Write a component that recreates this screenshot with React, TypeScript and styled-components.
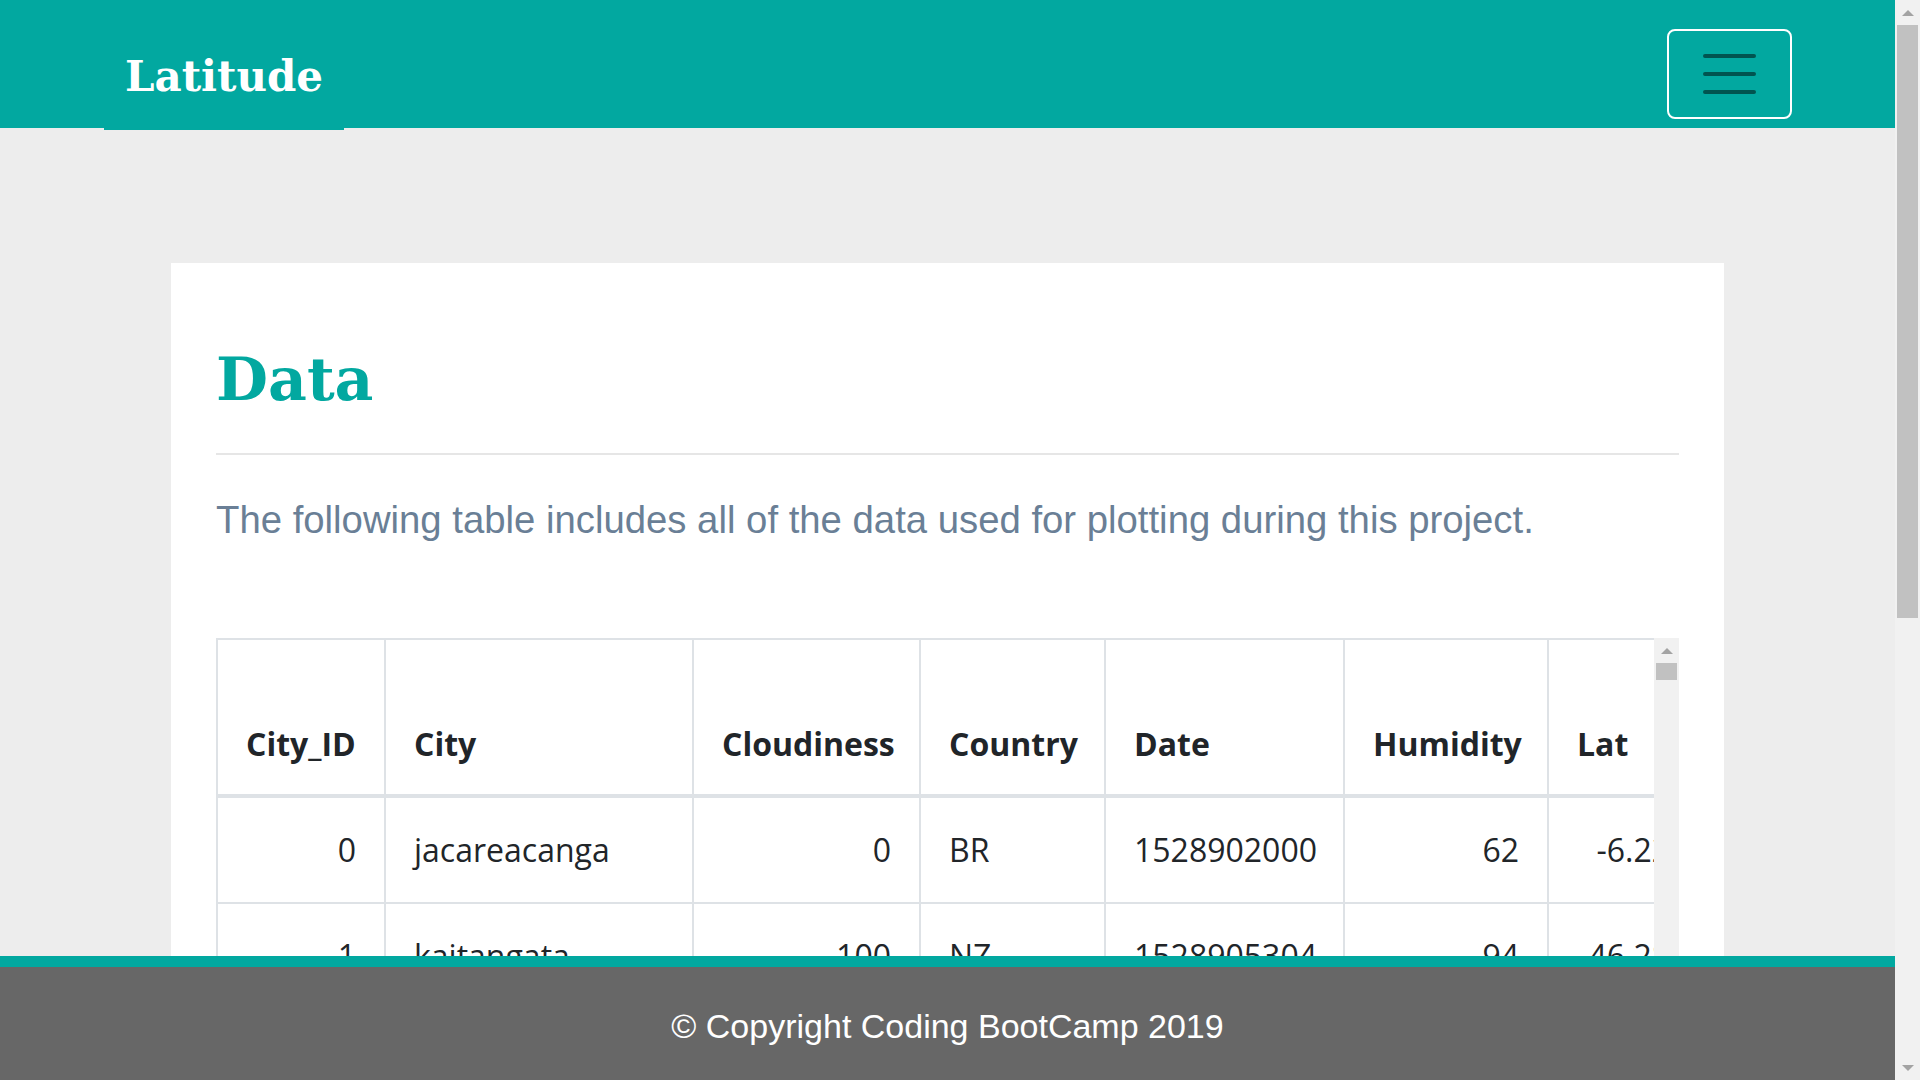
import styled, { createGlobalStyle } from "styled-components";

const GlobalStyle = createGlobalStyle`
  html, body {
    margin: 0;
    padding: 0;
    background: #ededed;
  }
  * {
    box-sizing: border-box;
  }
`;

const TEAL = "#02a8a0";

type Row = (string | number)[];

const columns = [
  { name: "City_ID", width: 168, numeric: true },
  { name: "City", width: 308, numeric: false },
  { name: "Cloudiness", width: 227, numeric: true },
  { name: "Country", width: 185, numeric: false },
  { name: "Date", width: 239, numeric: false },
  { name: "Humidity", width: 204, numeric: true },
  { name: "Lat", width: 151, numeric: true },
  { name: "Lng", width: 170, numeric: true },
  { name: "Max Temp", width: 210, numeric: true },
  { name: "Wind Speed", width: 230, numeric: true },
];

const places: [string, string][] = [
  ["jacareacanga", "BR"],
  ["kaitangata", "NZ"],
  ["ushuaia", "AR"],
  ["hermanus", "ZA"],
  ["punta arenas", "CL"],
  ["rikitea", "PF"],
  ["busselton", "AU"],
  ["albany", "AU"],
  ["mataura", "NZ"],
  ["hobart", "AU"],
  ["castro", "CL"],
  ["vaini", "IN"],
  ["new norfolk", "AU"],
  ["atuona", "PF"],
  ["bluff", "NZ"],
  ["cape town", "ZA"],
  ["bredasdorp", "ZA"],
  ["port alfred", "ZA"],
  ["tasiilaq", "GL"],
  ["saint-philippe", "CA"],
  ["lebu", "ET"],
  ["hilo", "US"],
  ["avarua", "CK"],
  ["hithadhoo", "MV"],
  ["butaritari", "KI"],
  ["kapaa", "US"],
  ["qaanaq", "GL"],
  ["jamestown", "AU"],
  ["upernavik", "GL"],
  ["east london", "ZA"],
];

// deterministic filler for the rest of the table
let seed = 11;
const rnd = () => {
  seed = (seed * 16807) % 2147483647;
  return seed / 2147483647;
};

const rows: Row[] = [
  [0, "jacareacanga", 0, "BR", 1528902000, 62, -6.22, -57.76, 89.14, 3.71],
  [1, "kaitangata", 100, "NZ", 1528905304, 94, -46.28, 169.85, 42.41, 3.8],
];
for (let i = 2; i < 60; i++) {
  const [city, country] = places[i % places.length];
  rows.push([
    i,
    city,
    Math.round(rnd() * 100),
    country,
    1528902000 + Math.round(rnd() * 9000),
    Math.round(20 + rnd() * 80),
    Math.round((rnd() * 150 - 70) * 100) / 100,
    Math.round((rnd() * 360 - 180) * 100) / 100,
    Math.round((20 + rnd() * 80) * 100) / 100,
    Math.round(rnd() * 2000) / 100,
  ]);
}

type ScrollbarProps = { thumbTop: number; thumbSize: number };

// classic grey scrollbar, drawn since the capture hides native ones
const Scrollbar = ({ thumbTop, thumbSize }: ScrollbarProps) => (
  <Rail>
    <RailButton>
      <svg width="12" height="6" viewBox="0 0 12 6">
        <polygon points="0,6 6,0 12,6" fill="#a3a3a3" />
      </svg>
    </RailButton>
    <RailTrack>
      <RailThumb $top={thumbTop} $size={thumbSize} />
    </RailTrack>
    <RailButton>
      <svg width="12" height="6" viewBox="0 0 12 6">
        <polygon points="0,0 12,0 6,6" fill="#a3a3a3" />
      </svg>
    </RailButton>
  </Rail>
);

const App = () => {
  return (
    <>
      <GlobalStyle />
      <Screen>
        <Column>
          <PageScroll>
            <Header>
              <Brand href="#">Latitude</Brand>
              <Toggler type="button" aria-label="Toggle navigation">
                <svg width="53" height="40" viewBox="0 0 53 40">
                  <path
                    d="M2 2h49M2 20h49M2 38h49"
                    stroke="rgba(0,0,0,0.5)"
                    strokeWidth="4"
                    strokeLinecap="round"
                  />
                </svg>
              </Toggler>
            </Header>

            <Main>
              <Card>
                <Title>Data</Title>
                <Rule />
                <Lead>
                  The following table includes all of the data used for
                  plotting during this project.
                </Lead>
                <TableFrame>
                  <TableScroll>
                    <Table>
                      <thead>
                        <tr>
                          {columns.map((c) => (
                            <Th key={c.name} $width={c.width}>
                              {c.name}
                            </Th>
                          ))}
                        </tr>
                      </thead>
                      <tbody>
                        {rows.map((r) => (
                          <tr key={r[0]}>
                            {r.map((v, j) => (
                              <Td key={j} $numeric={columns[j].numeric}>
                                {v}
                              </Td>
                            ))}
                          </tr>
                        ))}
                      </tbody>
                    </Table>
                  </TableScroll>
                  <Scrollbar thumbTop={0} thumbSize={17} />
                </TableFrame>
              </Card>
            </Main>
          </PageScroll>
          <Footer>© Copyright Coding BootCamp 2019</Footer>
        </Column>
        <Scrollbar thumbTop={0} thumbSize={593} />
      </Screen>
    </>
  );
};

const Screen = styled.div`
  display: flex;
  height: 100vh;
  overflow: hidden;
`;

const Column = styled.div`
  flex: 1;
  min-width: 0;
  display: flex;
  flex-direction: column;
`;

const PageScroll = styled.div`
  flex: 1;
  min-height: 0;
  overflow-y: auto;
`;

const Rail = styled.div`
  flex: none;
  width: 25px;
  background: #f1f1f1;
  display: flex;
  flex-direction: column;
`;

const RailButton = styled.div`
  flex: none;
  height: 25px;
  display: flex;
  align-items: center;
  justify-content: center;
`;

const RailTrack = styled.div`
  flex: 1;
  padding: 0 2px;
`;

const RailThumb = styled.div<{ $top: number; $size: number }>`
  margin-top: ${(p) => p.$top}px;
  height: ${(p) => p.$size}px;
  background: #c1c1c1;
`;

const Header = styled.nav`
  height: 128px;
  background: ${TEAL};
  display: flex;
  justify-content: space-between;
  align-items: flex-start;
  padding: 0 103px 0 104px;
`;

const Brand = styled.a`
  display: block;
  width: 240px;
  height: 130px;
  padding-top: 52px;
  background: ${TEAL};
  color: #fff;
  text-align: center;
  text-decoration: none;
  font-family: "DejaVu Serif", "Liberation Serif", serif;
  font-weight: 700;
  font-size: 42px;
  line-height: 49px;
`;

const Toggler = styled.button`
  margin-top: 29px;
  width: 125px;
  height: 90px;
  border: 2px solid #fff;
  border-radius: 8px;
  background: transparent;
  display: flex;
  align-items: center;
  justify-content: center;
  padding: 0;
  cursor: pointer;
`;

const Main = styled.main`
  padding: 135px 0 260px;
`;

const Card = styled.section`
  width: 1553px;
  margin: 0 auto;
  background: #fff;
  padding: 80px 45px 80px;
`;

const Title = styled.h1`
  margin: 0;
  font-family: "DejaVu Serif", "Liberation Serif", serif;
  font-weight: 700;
  font-size: 60px;
  line-height: 73px;
  color: ${TEAL};
`;

const Rule = styled.hr`
  margin: 37px 0 0;
  border: 0;
  border-top: 2px solid #e6e6e6;
`;

const Lead = styled.p`
  margin: 36px 0 90px;
  font-family: "Liberation Sans", Arial, sans-serif;
  font-size: 38.3px;
  line-height: 57px;
  color: #6a7f96;
`;

const TableFrame = styled.div`
  display: flex;
  height: 900px;
`;

const TableScroll = styled.div`
  flex: 1;
  min-width: 0;
  overflow: hidden;
`;

const Table = styled.table`
  table-layout: fixed;
  width: ${columns.reduce((s, c) => s + c.width, 0)}px;
  border-collapse: collapse;
  border: 2px solid #dee2e6;
  font-family: "Open Sans", "Noto Sans", sans-serif;
  font-size: 32px;
  line-height: 48px;
  color: #212529;
`;

const Th = styled.th<{ $width: number }>`
  width: ${(p) => p.$width}px;
  padding: 80px 28px 26px;
  text-align: left;
  vertical-align: bottom;
  font-weight: 700;
  white-space: nowrap;
  border: 2px solid #dee2e6;
  border-bottom-width: 4px;
`;

const Td = styled.td<{ $numeric: boolean }>`
  padding: 28px;
  text-align: ${(p) => (p.$numeric ? "right" : "left")};
  white-space: nowrap;
  overflow: hidden;
  border: 2px solid #dee2e6;
`;

const Footer = styled.footer`
  flex: none;
  height: 124px;
  border-top: 11px solid ${TEAL};
  background: #676767;
  color: #fff;
  display: flex;
  align-items: center;
  justify-content: center;
  padding-top: 6px;
  font-family: "Liberation Sans", Arial, sans-serif;
  font-size: 34px;
`;

export default App;
